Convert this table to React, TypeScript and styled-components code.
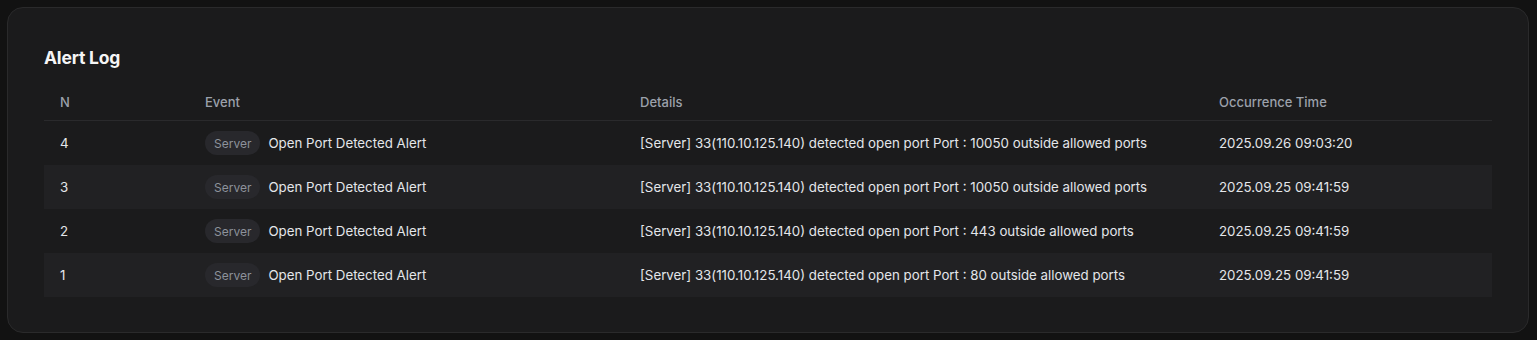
import React from "react";
import styled, { createGlobalStyle } from "styled-components";

const GlobalStyle = createGlobalStyle`
  html, body {
    margin: 0;
    padding: 0;
    background: #121212;
    font-family: Inter, "Noto Sans", sans-serif;
  }
`;

const Page = styled.div`
  padding: 7px 8px 7px 7px;
`;

const Card = styled.section`
  background: #1b1b1c;
  border: 1px solid #2a2a2b;
  border-radius: 16px;
  padding: 36px 36px 35px 36px;
`;

const Title = styled.h2`
  margin: 0 0 12px 0;
  color: #f5f5f5;
  font-size: 17.5px;
  font-weight: 700;
  line-height: 28px;
  letter-spacing: -0.2px;
`;

const Table = styled.table`
  width: 100%;
  border-collapse: collapse;
  table-layout: fixed;
  font-size: 13.3px;
`;

// widths are content widths; each cell adds 32px of padding
const HeadCell = styled.th<{ $w?: number }>`
  width: ${(p) => (p.$w ? `${p.$w - 32}px` : "auto")};
  text-align: left;
  font-weight: 500;
  font-size: 13px;
  color: #9ca1ab;
  height: 35px;
  padding: 0 16px 1px 16px;
  border-bottom: 1px solid #2a2a2c;
`;

const Row = styled.tr<{ $alt: boolean }>`
  background: ${(p) => (p.$alt ? "#212123" : "transparent")};
`;

const Cell = styled.td`
  height: 44px;
  padding: 0 16px;
  color: #e4e6ea;
  white-space: nowrap;
`;

const EventWrap = styled.div`
  display: flex;
  align-items: center;
  gap: 8px;
`;

const Badge = styled.span`
  display: inline-flex;
  align-items: center;
  height: 24px;
  padding: 0 9px;
  border-radius: 12px;
  background: #28282c;
  color: #8d929b;
  font-size: 12px;
`;

type Alert = { n: number; port: number; time: string };

const alerts: Alert[] = [
  { n: 4, port: 10050, time: "2025.09.26 09:03:20" },
  { n: 3, port: 10050, time: "2025.09.25 09:41:59" },
  { n: 2, port: 443, time: "2025.09.25 09:41:59" },
  { n: 1, port: 80, time: "2025.09.25 09:41:59" },
];

export default function App() {
  return (
    <>
      <GlobalStyle />
      <Page>
        <Card>
          <Title>Alert Log</Title>
          <Table>
            <thead>
              <tr>
                <HeadCell $w={145}>N</HeadCell>
                <HeadCell $w={435}>Event</HeadCell>
                <HeadCell $w={579}>Details</HeadCell>
                <HeadCell>Occurrence Time</HeadCell>
              </tr>
            </thead>
            <tbody>
              {alerts.map((a, i) => (
                <Row key={a.n} $alt={i % 2 === 1}>
                  <Cell>{a.n}</Cell>
                  <Cell>
                    <EventWrap>
                      <Badge>Server</Badge>
                      Open Port Detected Alert
                    </EventWrap>
                  </Cell>
                  <Cell>
                    [Server] 33(110.10.125.140) detected open port Port : {a.port} outside allowed ports
                  </Cell>
                  <Cell>{a.time}</Cell>
                </Row>
              ))}
            </tbody>
          </Table>
        </Card>
      </Page>
    </>
  );
}
